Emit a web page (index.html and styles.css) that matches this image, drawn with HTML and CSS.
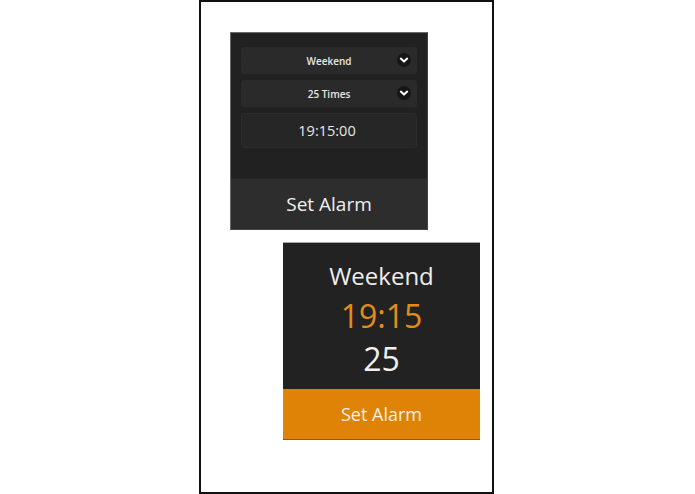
FILE: index.html
```html
<!DOCTYPE html>
<html>
<head>
<meta charset="utf-8">
<link rel="stylesheet" href="styles.css">
</head>
<body>
<div class="frame">
  <div class="card setup">
    <div class="fields">
      <div class="select"><span>Weekend</span><span class="chev"><svg width="14" height="14" viewBox="0 0 14 14"><circle cx="7" cy="7" r="7" fill="#161616"/><path d="M3.8 5.6 L7 8.6 L10.2 5.6" fill="none" stroke="#fff" stroke-width="2" stroke-linecap="round" stroke-linejoin="round"/></svg></span></div>
      <div class="select"><span>25 Times</span><span class="chev"><svg width="14" height="14" viewBox="0 0 14 14"><circle cx="7" cy="7" r="7" fill="#161616"/><path d="M3.8 5.6 L7 8.6 L10.2 5.6" fill="none" stroke="#fff" stroke-width="2" stroke-linecap="round" stroke-linejoin="round"/></svg></span></div>
      <div class="timebox">19:15:00</div>
    </div>
    <div class="btn dark">Set Alarm</div>
  </div>
  <div class="card summary">
    <div class="info">
      <div class="day">Weekend</div>
      <div class="time">19:15</div>
      <div class="count">25</div>
    </div>
    <div class="btn orange">Set Alarm</div>
  </div>
</div>
</body>
</html>
```
FILE: styles.css
```css
html, body { margin: 0; padding: 0; background: #fff; }
body { font-family: "Open Sans", "Noto Sans", sans-serif; }
.frame {
  box-sizing: border-box;
  width: 295px;
  height: 494px;
  margin-left: 199px;
  border: 2px solid #111;
  display: flex;
  flex-direction: column;
  padding-top: 30px;
}
.card { box-sizing: border-box; display: flex; flex-direction: column; }
.setup {
  width: 198px; height: 198px;
  margin-left: 29px;
  background: #212121;
  border: 1px solid #6a6a6a;
  border-right-color: #444;
  border-bottom-color: #444;
}
.fields { flex: 1; padding: 14px 10px 0 10px; display: flex; flex-direction: column; gap: 6px; }
.select {
  height: 27px; background: #2a2a2a; border-radius: 3px;
  display: flex; align-items: center; justify-content: center; position: relative;
  color: #e8e8e8; font-size: 10px; font-weight: 600;
}
.chev { position: absolute; right: 6px; top: 6px; height: 14px; }
.chev svg { display: block; }
.timebox {
  height: 35px; background: #262626; border-radius: 3px; border: 1px solid #2c2c2c; box-sizing: border-box;
  display: flex; align-items: center; justify-content: center;
  color: #e6e6e6; font-size: 14.5px; padding-right: 4px;
}
.btn { height: 51px; display: flex; align-items: center; justify-content: center; color: #f0f0f0; font-weight: 500; }
.dark { background: #2d2d2d; font-size: 19px; border-top: 1px solid #262626; box-sizing: border-box; }
.summary {
  width: 197px; height: 198px;
  margin-left: 82px; margin-top: 12px;
  background: #222;
  border-top: 1px solid #aaa;
}
.info { flex: 1; display: flex; flex-direction: column; align-items: center; padding-top: 21px; line-height: 1; }
.day { color: #eee; font-size: 24px; height: 36px; }
.time { color: #e28d1b; font-size: 32px; height: 43px; }
.count { color: #f0f0f0; font-size: 32px; }
.orange { background: #df8306; font-size: 18px; border-bottom: 1px solid #8a5a20; box-sizing: border-box; color: #f6f0e6; }
```
